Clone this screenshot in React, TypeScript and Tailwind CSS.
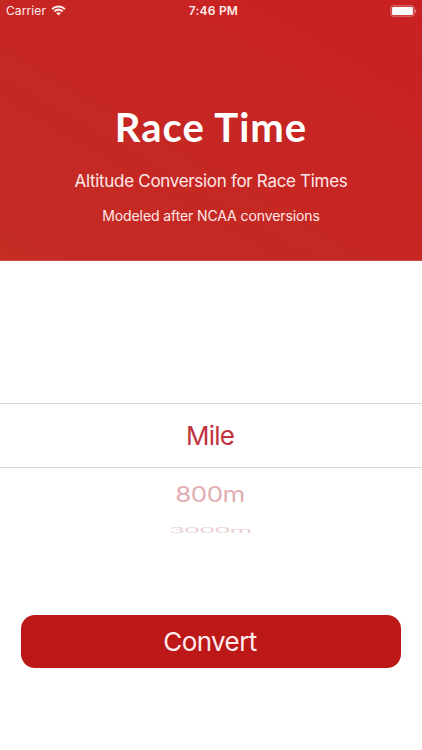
interface PickerRowProps {
  label: string;
  rowClass: string;
  textClass: string;
}

function WifiIcon() {
  return (
    <svg viewBox="0 0 14 11" className="w-[15px] h-[11px] -mt-px" fill="#fff0f0">
      <path d="M0 3.5C4 -0.5 10 -0.5 14 3.5L12.6 4.9C9.4 1.8 4.6 1.8 1.4 4.9Z" />
      <path d="M2.3 5.8C5 3.2 9 3.2 11.7 5.8L10.3 7.2C8.4 5.4 5.6 5.4 3.7 7.2Z" />
      <path d="M7 10.6L4.6 8.1C6 6.9 8 6.9 9.4 8.1Z" />
    </svg>
  );
}

function BatteryIcon() {
  return (
    <svg viewBox="0 0 28 12" className="w-[28px] h-[12px]">
      <rect x="0.9" y="0.8" width="23.2" height="10.4" rx="2.4" fill="none" stroke="#e08080" />
      <rect x="2.1" y="2" width="20.8" height="8" rx="1.2" fill="#fff" />
      <path d="M25 4.2C26.6 4.6 26.6 7.4 25 7.8Z" fill="#e58c8c" />
    </svg>
  );
}

function StatusBar() {
  return (
    <div className="grid grid-cols-3 items-center h-[22px] pl-[6px] pr-1 text-[#ffecec]">
      <div className="flex items-center gap-[5px]">
        <span className="text-[12px] leading-[22px] tracking-[0.1px]">Carrier</span>
        <WifiIcon />
      </div>
      <span className="pl-[3px] text-center text-[12px] leading-[22px] font-semibold tracking-[0.2px]">7:46 PM</span>
      <div className="flex justify-end">
        <BatteryIcon />
      </div>
    </div>
  );
}

function PickerRow({ label, rowClass, textClass }: PickerRowProps) {
  return (
    <div className={`flex items-center justify-center ${rowClass}`}>
      <span className={`text-[26px] leading-none ${textClass}`}>{label}</span>
    </div>
  );
}

export default function App() {
  return (
    <div className="flex flex-col w-[422px] h-[750px] bg-white overflow-hidden font-['Inter',sans-serif]">
      <header className="flex flex-col h-[261px] bg-linear-[30deg,#c42c24,#c82122] border-b border-[#cf4a47]">
        <StatusBar />
        <div className="flex flex-col items-center pt-[80px] text-[#ffe9e9]">
          <h1 className="font-['Lato',sans-serif] font-bold text-[40px] leading-[50px] tracking-[1px] text-white">Race Time</h1>
          <p className="mt-[17px] text-[17px] leading-6 tracking-[-0.31px]">Altitude Conversion for Race Times</p>
          <p className="mt-[13px] text-[14px] leading-5 tracking-[-0.1px]">Modeled after NCAA conversions</p>
        </div>
      </header>

      <div className="flex flex-col pt-[142px]">
        <PickerRow label="Mile" rowClass="h-[65px] pr-[2px] border-y border-[#d8d8d8]" textClass="text-[#bf343f] tracking-[-0.8px]" />
        <PickerRow label="800m" rowClass="h-[53px] pr-[2px]" textClass="text-[#e2aeb3] tracking-[-0.5px] scale-y-[0.82]" />
        <PickerRow label="3000m" rowClass="h-[20px] pr-[2px]" textClass="text-[#eccfd2] tracking-[-1.2px] scale-y-[0.27]" />
      </div>

      <button className="mt-[74px] mx-[21px] h-[53px] pr-[2px] rounded-[14px] bg-[#bd1818] text-[#ffecec] text-[26px] leading-none tracking-[-0.6px]">
        Convert
      </button>
    </div>
  );
}
